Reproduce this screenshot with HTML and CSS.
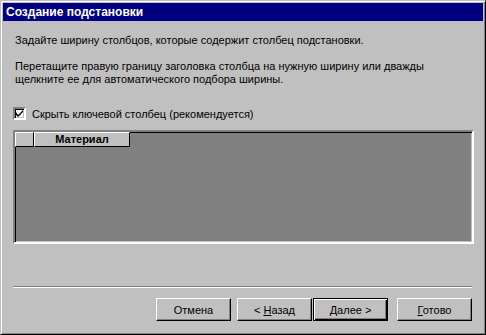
FILE: index.html
```html
<!DOCTYPE html>
<html lang="ru">
<head>
  <meta charset="UTF-8" />
  <title>Создание подстановки</title>
  <link rel="stylesheet" href="styles.css">
</head>
<body>
  <div class="window">
    <div class="titlebar">Создание подстановки</div>

    <div class="content">
      <p class="text first">Задайте ширину столбцов, которые содержит столбец подстановки.</p>
      <p class="text">Перетащите правую границу заголовка столбца на нужную ширину или дважды<br/>щелкните ее для автоматического подбора ширины.</p>

      <label class="check">
        <span class="box">
          <svg width="7" height="7" viewBox="0 0 7 7"><path d="M0 2v3l2 2 5-5V0L2 5z" fill="#000"/></svg>
        </span>
        Скрыть ключевой столбец (рекомендуется)
      </label>

      <div class="grid">
        <div class="grid-head">
          <div class="cell sel"></div>
          <div class="cell col">Материал</div>
        </div>
      </div>
    </div>

    <div class="sep"></div>

    <div class="buttons">
      <button class="btn">Отмена</button>
      <div class="pair">
        <button class="btn">&lt; <u>Н</u>азад</button>
        <button class="btn default"><u>Д</u>алее &gt;</button>
      </div>
      <button class="btn"><u>Г</u>отово</button>
    </div>
  </div>
</body>
</html>
```

FILE: styles.css
```css
body {
  margin: 0;
  background: #c0c0c0;
  font-family: "Liberation Sans", Arial, sans-serif;
  font-size: 11px;
  color: #000;
}
.window {
  width: 486px;
  height: 335px;
  box-sizing: border-box;
  border: 1px solid;
  border-color: #c0c0c0 #000 #000 #c0c0c0;
  box-shadow: inset 1px 1px 0 #fff, inset -1px -1px 0 #808080;
  padding: 2px;
  display: flex;
  flex-direction: column;
}
.titlebar {
  height: 18px;
  background: #000080;
  color: #fff;
  font-weight: bold;
  font-size: 12px;
  line-height: 18px;
  padding-left: 3px;
}
.content {
  padding: 0 9px 0 10px;
}
.text {
  margin: 13px 0 0 2px;
  line-height: 13px;
}
.check {
  display: flex;
  align-items: center;
  gap: 6px;
  margin-top: 20px;
  height: 15px;
}
.box {
  width: 9px;
  height: 9px;
  background: #fff;
  border: 2px solid;
  border-color: #808080 #fff #fff #808080;
  box-shadow: inset 1px 1px 0 #000, inset -1px -1px 0 #c0c0c0;
  display: flex;
  align-items: center;
  justify-content: center;
}
.grid {
  margin-top: 9px;
  height: 110px;
  background: #808080;
  border: 2px solid;
  border-color: #808080 #fff #fff #808080;
  box-shadow: inset 1px 1px 0 #000, inset -1px -1px 0 #c0c0c0;
}
.grid-head {
  display: flex;
  height: 15px;
}
.cell {
  box-sizing: border-box;
  background: #c0c0c0;
  border: 1px solid;
  border-color: #fff #000 #000 #fff;
}
.cell.sel {
  width: 19px;
}
.cell.col {
  width: 96px;
  font-weight: bold;
  text-align: center;
  line-height: 13px;
}
.sep {
  margin: auto 11px 0 10px;
  border-top: 1px solid #808080;
  border-bottom: 1px solid #fff;
}
.buttons {
  display: flex;
  justify-content: flex-end;
  gap: 6px;
  padding: 10px 11px 11px 0;
}
.pair {
  display: flex;
  gap: 1px;
  margin-right: 3px;
}
.btn {
  width: 75px;
  height: 23px;
  box-sizing: border-box;
  background: #c0c0c0;
  font-family: "Liberation Sans", Arial, sans-serif;
  font-size: 11px;
  padding: 0;
  border: 1px solid;
  border-color: #fff #000 #000 #fff;
  box-shadow: inset -1px -1px 0 #808080;
}
.btn.default {
  border: 1px solid #000;
  box-shadow: inset 1px 1px 0 #fff, inset -1px -1px 0 #000, inset -2px -2px 0 #808080;
}
```
